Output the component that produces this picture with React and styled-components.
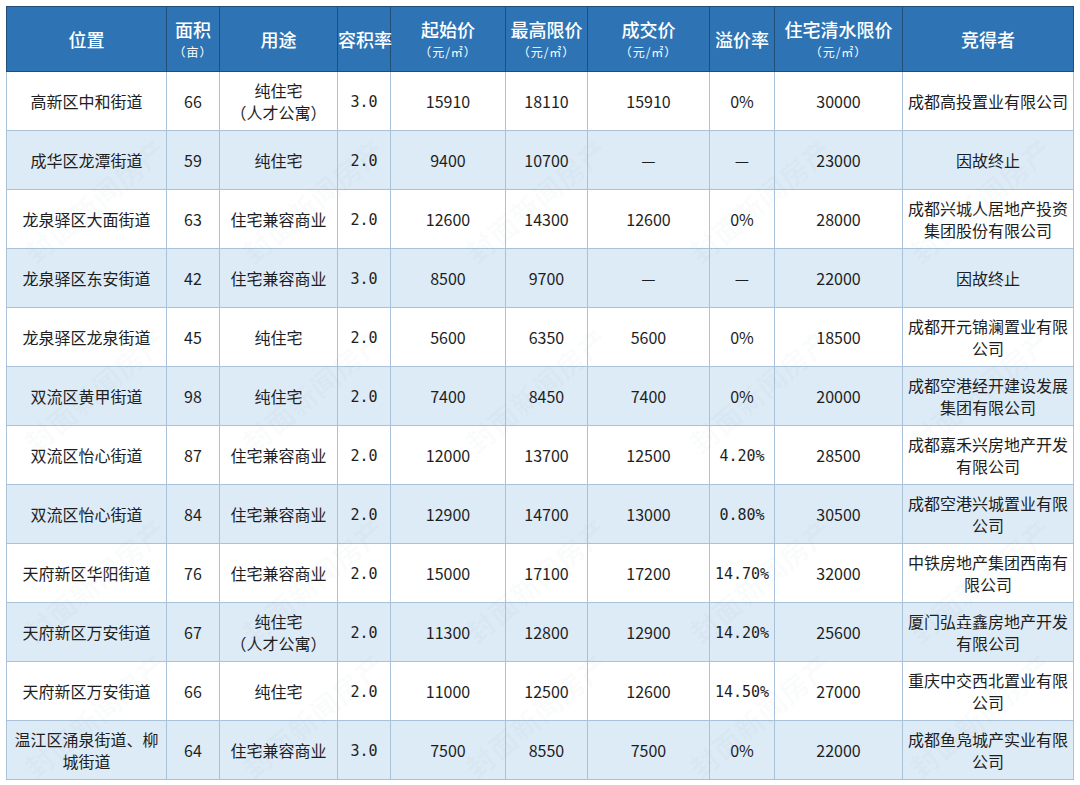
import React from "react";
import styled, { createGlobalStyle } from "styled-components";

const GlobalStyle = createGlobalStyle`
  html, body {
    margin: 0;
    padding: 0;
    background: #ffffff;
  }
  body {
    font-family: "Noto Sans CJK SC", "Noto Sans", sans-serif;
    color: #1e1e1e;
  }
`;

const Page = styled.div`
  position: relative;
  width: 1080px;
  height: 785px;
  padding: 6px 0 0 6px;
  box-sizing: border-box;
  overflow: hidden;
`;

const Table = styled.table`
  border-collapse: collapse;
  table-layout: fixed;
  width: 1068px;
  border: 1px solid #7f9fbd;
`;

const HeadRow = styled.tr`
  height: 65px;
  background: #2e74b5;
`;

const HeadCell = styled.th`
  border: 1px solid #1f4e79;
  padding: 0;
  color: #ffffff;
  font-weight: 500;
  font-size: 18px;
  line-height: 21px;
  text-align: center;
  vertical-align: middle;
  white-space: nowrap;
  overflow: visible;
`;

const Title = styled.div`
  line-height: 21px;
`;

const Unit = styled.div`
  font-size: 12px;
  line-height: 17px;
  font-weight: 400;
  letter-spacing: 1px;
  margin-top: 3px;
`;

const Row = styled.tr`
  height: 59px;
  background: ${(p) => (p.$alt ? "#ddebf7" : "#ffffff")};
`;

const Cell = styled.td`
  border: 1px solid #a9c2da;
  padding: 0 4px;
  font-size: 16px;
  line-height: 22px;
  text-align: center;
  vertical-align: middle;
  word-break: break-all;
`;

const Mono = styled.span`
  font-family: "DejaVu Sans Mono", monospace;
  font-size: 15px;
  white-space: nowrap;
  margin: 0 -4px;
`;

const Watermark = styled.span`
  position: absolute;
  left: ${(p) => p.$x}px;
  top: ${(p) => p.$y}px;
  transform: translate(-50%, -50%) rotate(-40deg);
  font-size: 28px;
  font-weight: 700;
  color: rgba(120, 130, 140, 0.045);
  white-space: nowrap;
  pointer-events: none;
  letter-spacing: 1px;
`;

const cols = [160, 53, 118, 53, 115, 82, 122, 65, 128, 171];

const headers = [
  ["位置"],
  ["面积", "（亩）"],
  ["用途"],
  ["容积率"],
  ["起始价", "（元/㎡）"],
  ["最高限价", "（元/㎡）"],
  ["成交价", "（元/㎡）"],
  ["溢价率"],
  ["住宅清水限价", "（元/㎡）"],
  ["竞得者"],
];

const rows = [
  ["高新区中和街道", "66", "纯住宅\n（人才公寓）", "3.0", "15910", "18110", "15910", "0%", "30000", "成都高投置业有限公司"],
  ["成华区龙潭街道", "59", "纯住宅", "2.0", "9400", "10700", "—", "—", "23000", "因故终止"],
  ["龙泉驿区大面街道", "63", "住宅兼容商业", "2.0", "12600", "14300", "12600", "0%", "28000", "成都兴城人居地产投资集团股份有限公司"],
  ["龙泉驿区东安街道", "42", "住宅兼容商业", "3.0", "8500", "9700", "—", "—", "22000", "因故终止"],
  ["龙泉驿区龙泉街道", "45", "纯住宅", "2.0", "5600", "6350", "5600", "0%", "18500", "成都开元锦澜置业有限公司"],
  ["双流区黄甲街道", "98", "纯住宅", "2.0", "7400", "8450", "7400", "0%", "20000", "成都空港经开建设发展集团有限公司"],
  ["双流区怡心街道", "87", "住宅兼容商业", "2.0", "12000", "13700", "12500", "4.20%", "28500", "成都嘉禾兴房地产开发有限公司"],
  ["双流区怡心街道", "84", "住宅兼容商业", "2.0", "12900", "14700", "13000", "0.80%", "30500", "成都空港兴城置业有限公司"],
  ["天府新区华阳街道", "76", "住宅兼容商业", "2.0", "15000", "17100", "17200", "14.70%", "32000", "中铁房地产集团西南有限公司"],
  ["天府新区万安街道", "67", "纯住宅\n（人才公寓）", "2.0", "11300", "12800", "12900", "14.20%", "25600", "厦门弘垚鑫房地产开发有限公司"],
  ["天府新区万安街道", "66", "纯住宅", "2.0", "11000", "12500", "12600", "14.50%", "27000", "重庆中交西北置业有限公司"],
  ["温江区涌泉街道、柳城街道", "64", "住宅兼容商业", "3.0", "7500", "8550", "7500", "0%", "22000", "成都鱼凫城产实业有限公司"],
];

// faint diagonal watermark grid
const marks = [];
[200, 390, 580, 715].forEach((y) => {
  [95, 313, 536, 760, 980].forEach((x) => marks.push([x, y]));
});

const renderValue = (v) => {
  if (v.includes("\n")) {
    const [a, b] = v.split("\n");
    return (
      <>
        {a}
        <br />
        {b}
      </>
    );
  }
  if (/^\d+\.\d+%?$/.test(v)) return <Mono>{v}</Mono>;
  return v;
};

export default function App() {
  return (
    <Page>
      <GlobalStyle />
      <Table>
        <colgroup>
          {cols.map((w, i) => (
            <col key={i} style={{ width: w }} />
          ))}
        </colgroup>
        <thead>
          <HeadRow>
            {headers.map(([title, unit], i) => (
              <HeadCell key={i}>
                <Title>{title}</Title>
                {unit && <Unit>{unit}</Unit>}
              </HeadCell>
            ))}
          </HeadRow>
        </thead>
        <tbody>
          {rows.map((r, i) => (
            <Row key={i} $alt={i % 2 === 1}>
              {r.map((v, j) => (
                <Cell key={j}>{renderValue(v)}</Cell>
              ))}
            </Row>
          ))}
        </tbody>
      </Table>
      {marks.map(([x, y], i) => (
        <Watermark key={i} $x={x} $y={y}>
          封面新闻房产
        </Watermark>
      ))}
    </Page>
  );
}
